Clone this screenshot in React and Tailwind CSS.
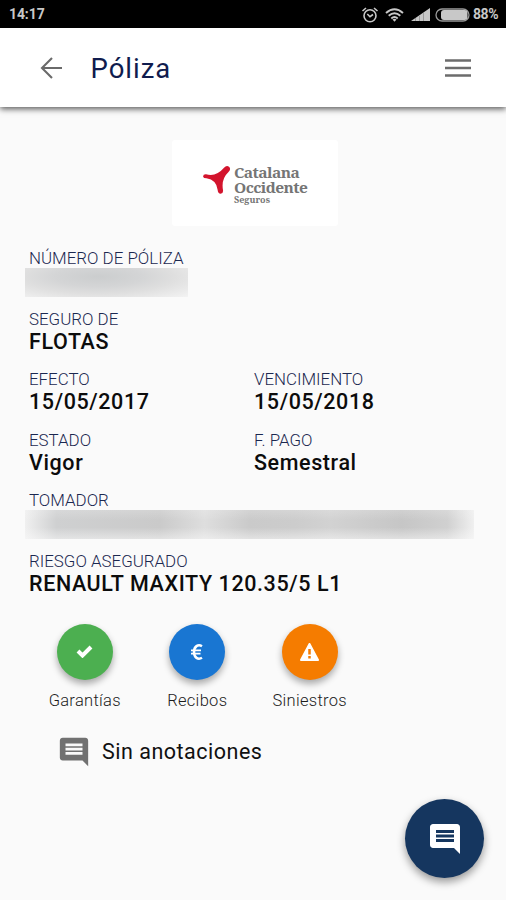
const COMMENT =
  "M21.99 4c0-1.1-.89-2-1.99-2H4c-1.1 0-2 .9-2 2v12c0 1.1.9 2 2 2h14l4 4-.01-18zM18 14H6v-2h12v2zm0-3H6V9h12v2zm0-3H6V6h12v2z";

function StatusBar() {
  return (
    <div className="flex h-7 shrink-0 items-center justify-between bg-black pt-px pr-2 pl-[9px] text-[#c8c8c8]">
      <span className="text-[14px] font-bold tracking-[-0.1px]">14:17</span>
      <div className="flex items-center">
        <svg className="mr-[6px] h-4 w-[18px]" viewBox="0 0 18 16" fill="none" stroke="currentColor" strokeWidth="1.6">
          <circle cx="9" cy="8.7" r="6" />
          <path d="M1.5 4 5 1M16.500 4 13 1M6.300 7l2.700 2.700 3-2.200" />
        </svg>
        <svg className="mr-[7px] h-[14px] w-[19px]" viewBox="0 0 19 14" fill="none" stroke="currentColor" strokeWidth="1.900">
          <path d="M1 5Q9.500-2.500 18 5M3.700 7.800q5.800-5 11.600 0M6.300 10.400q3.200-2.600 6.400 0" />
          <path d="m7.500 11.400 2 2.400 2-2.400q-2-1.400-4 0Z" fill="currentColor" stroke="none" />
        </svg>
        <svg className="mr-[5px] h-[13px] w-[19px]" viewBox="0 0 19 13">
          <path d="M0 13 19 0v13Z" fill="currentColor" />
          <path d="M4.500 10v3M8.500 8v5M12.500 5v8" stroke="#888" strokeWidth=".7" />
        </svg>
        <svg className="mr-[3px] h-[14px] w-[35px]" viewBox="0 0 35 14">
          <rect x="1" y="1" width="33" height="12" rx="6" fill="none" stroke="#999" strokeWidth="1.300" />
          <rect x="6" y="2" width="26.500" height="10" rx="3" fill="currentColor" />
        </svg>
        <span className="text-[14px] font-bold tracking-[-0.5px]">88%</span>
      </div>
    </div>
  );
}

function Field({ label, value, children }) {
  return (
    <div className="h-[60.5px]">
      <div className="text-[16.900px] leading-[21px] font-light whitespace-nowrap text-[#1b2850]">{label}</div>
      {value && (
        <div className="mt-px text-[21.5px] leading-[22px] font-medium tracking-[0.6px] whitespace-nowrap text-[#0c0c0c]">{value}</div>
      )}
      {children}
    </div>
  );
}

function Action({ label, color, children }) {
  return (
    <div className="flex w-[112.5px] flex-col items-center">
      <div className={`flex size-14 items-center justify-center rounded-full shadow-[0_4px_7px_rgba(0,0,0,0.33)] ${color}`}>
        {children}
      </div>
      <span className="mt-[11px] text-[16.5px] leading-5 font-light tracking-[0.300px] text-[#1c1c1c]">{label}</span>
    </div>
  );
}

export default function App() {
  return (
    <div className="relative flex h-[900px] w-[506px] flex-col overflow-hidden bg-[#fafafa] font-['Roboto',sans-serif]">
      <StatusBar />
      <header className="flex h-[79px] shrink-0 items-center bg-white pt-px pr-[35px] pl-[40px] shadow-[0_2px_6px_rgba(0,0,0,0.65)]">
        <svg className="h-[22px] w-[23px]" viewBox="0 0 23 22" fill="none" stroke="#6a6a6a" strokeWidth="2.100">
          <path d="M22 11H2M12 1 2 11l10 10" />
        </svg>
        <h1 className="mt-px ml-[27.500px] text-[27.5px] leading-8 font-[450] tracking-[1px] text-[#101c4e]">Póliza</h1>
        <svg className="ml-auto h-[18px] w-[26px]" viewBox="0 0 26 18" stroke="#6c6c6c" strokeWidth="2.400">
          <path d="M0 1.500h26M0 9h26M0 16.500h26" />
        </svg>
      </header>

      <main className="flex flex-col">
        <div className="mt-[33px] ml-[172px] flex h-[86px] w-[166px] rounded-[3px] bg-white">
          <svg className="mt-[26px] ml-[30px] h-[29px] w-[29px]" viewBox="0 0 29 29">
            <path d="M1.200 11Q.8 8 4 8.200q10 3 18-6.400 2.500-2.800 5-1Q29.400 3 26.500 6q-7.500 7-5.500 18 .5 3.500-2.400 3.700-2.600 0-3-4Q14.500 14 4.500 12.300 1.600 12.200 1.200 11Z" fill="#d3142d" />
          </svg>
          <div className="mt-[26px] ml-[3px] w-[76px] font-['Noto_Serif','DejaVu_Serif',serif] text-[#757575]">
            <div className="origin-left scale-x-[1.15] text-[13.500px] leading-[15px] font-bold tracking-[-0.5px]">Catalana</div>
            <div className="origin-left scale-x-[1.15] text-[13.500px] leading-[14px] font-bold tracking-[-0.5px]">Occidente</div>
            <div className="origin-left text-[9px] leading-[9px] font-bold">Seguros</div>
          </div>
        </div>

        <section className="mt-[22px] flex flex-col pl-[29px]">
          <Field label="NÚMERO DE PÓLIZA">
            <div className="-mt-px -ml-[4px] h-[29px] w-[163px] bg-[radial-gradient(ellipse_at_45%_30%,#cbcdce_0%,#d4d5d6_35%,#dfdfdf_60%,#f3f3f3_100%)]" />
          </Field>
          <Field label="SEGURO DE" value="FLOTAS" />
          <div className="grid grid-cols-[225px_1fr]">
            <Field label="EFECTO" value="15/05/2017" />
            <Field label="VENCIMIENTO" value="15/05/2018" />
            <Field label="ESTADO" value="Vigor" />
            <Field label="F. PAGO" value="Semestral" />
          </div>
          <Field label="TOMADOR">
            <div className="-mt-px -ml-[4px] h-[29px] w-[449px] bg-[linear-gradient(180deg,rgba(250,250,250,0.2),rgba(250,250,250,0)_35%,rgba(250,250,250,0)_60%,rgba(250,250,250,0.5)),linear-gradient(90deg,#f0f0f0,#cfd0d1_7%,#cacaca_30%,#dedede_40%,#cacaca_50%,#cccccc_60%,#d2d2d2_68%,#c6c6c6_84%,#d0d0d0_94%,#f0f0f0)]" />
          </Field>
          <Field label="RIESGO ASEGURADO" value="RENAULT MAXITY 120.35/5 L1" />
        </section>

        <section className="mt-[12.500px] flex pl-[28.500px]">
          <Action label="Garantías" color="bg-[#4caf50]">
            <svg className="h-[13px] w-[17px]" viewBox="0 0 17 13" fill="none" stroke="white" strokeWidth="4">
              <path d="m2 6 4.500 4.500L15 2" />
            </svg>
          </Action>
          <Action label="Recibos" color="bg-[#1976d2]">
            <svg className="h-[16px] w-[12px]" viewBox="0 0 12 16" fill="none" stroke="white">
              <path d="M11 2.200C7-.2 3 2.500 3 8s4 8.200 8 5.800" strokeWidth="2.500" />
              <path d="M0 6.300h10M0 9.700h9.500" strokeWidth="1.700" />
            </svg>
          </Action>
          <Action label="Siniestros" color="bg-[#f57c00]">
            <svg className="h-[18px] w-[19px]" viewBox="0 0 19 18">
              <path d="M9.500 1 18 17H1Z" fill="white" stroke="white" strokeWidth="2" strokeLinejoin="round" />
              <path d="M9.500 6v5.500M9.500 13v2.500" stroke="#f57c00" strokeWidth="2.500" />
            </svg>
          </Action>
        </section>

        <div className="mt-[24.500px] flex items-center pl-[57px]">
          <svg className="size-[34px]" viewBox="0 0 24 24" fill="#717171">
            <path d={COMMENT} />
          </svg>
          <span className="ml-[11px] text-[21.5px] leading-7 font-[450] tracking-[0.5px] text-[#101010]">Sin anotaciones</span>
        </div>
      </main>

      <button className="absolute top-[799px] left-[405px] flex size-[79px] items-center justify-center rounded-full bg-[#15365f] shadow-[0_4px_9px_rgba(0,0,0,0.4)]">
        <svg className="size-[36px]" viewBox="0 0 24 24" fill="white">
          <path d={COMMENT} />
        </svg>
      </button>
    </div>
  );
}
